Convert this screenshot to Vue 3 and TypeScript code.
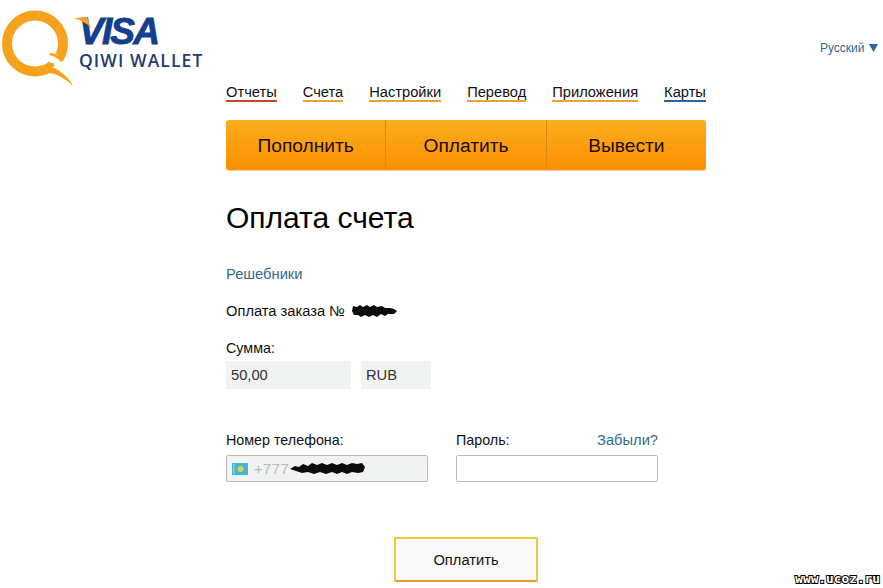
<script setup lang="ts">
const navItems = [
  { label: 'Отчеты', color: '#c8452f' },
  { label: 'Счета', color: '#e9a23c' },
  { label: 'Настройки', color: '#e9a23c' },
  { label: 'Перевод', color: '#e9a23c' },
  { label: 'Приложения', color: '#e9a23c' },
  { label: 'Карты', color: '#2a64a0' },
]

const actions = ['Пополнить', 'Оплатить', 'Вывести']
</script>

<template>
  <div class="page">
    <div class="brand">
      <svg class="q-mark" width="78" height="90" viewBox="0 0 78 90">
        <ellipse cx="35" cy="43.5" rx="28" ry="28" fill="none" stroke="#f6a21d" stroke-width="10" />
        <path d="M50 53 L58 55 L60 62 L66 60 L62 68 L54 72 L50 62 Z" fill="#fff" />
        <path d="M50 53 Q56 53 61 58 L59 60 Q55 56 49 55 Z" fill="#f6a21d" />
        <circle cx="52" cy="65" r="2.3" fill="#f6a21d" />
        <path d="M37 67 C47 64 57 68 62 73 C67 77 71 81 73 86 C68 81 63 78 57 75 C50 72 44 73 37 72 Z" fill="#f6a21d" />
      </svg>
      <div class="brand-text">
        <svg class="flick" width="18" height="12" viewBox="0 0 18 12">
          <path d="M0 1 L13 0 L17 11 C12 6 7 3 0 1 Z" fill="#f6a21d" />
        </svg>
        <span class="visa">VISA</span>
        <span class="wallet">QIWI WALLET</span>
      </div>
    </div>

    <main class="content">
      <nav class="nav">
        <a v-for="item in navItems" :key="item.label" class="nav-link" :style="{ borderColor: item.color }">
          {{ item.label }}
        </a>
      </nav>

      <div class="actions">
        <a v-for="action in actions" :key="action" class="action">{{ action }}</a>
      </div>

      <h1 class="title">Оплата счета</h1>

      <a class="link provider">Решебники</a>

      <p class="order">
        Оплата заказа №
        <svg class="blob" width="46" height="14" viewBox="0 0 46 14">
          <path d="M1 2 L5 3 L8 1 L11 3 L15 1 L18 3 L22 1 L25 3 L30 2 L33 4 L38 4 L42 5 L45 7 L42 10 L36 10 L33 12 L29 10 L25 13 L21 11 L17 13 L13 11 L9 13 L6 11 L2 11 L0 7 Z" fill="#0c0c0c" />
        </svg>
      </p>

      <div class="label sum-label">Сумма:</div>
      <div class="sum-row">
        <div class="readonly amount">50,00</div>
        <div class="readonly currency">RUB</div>
      </div>

      <div class="auth-row">
        <div class="field">
          <div class="label-row"><span class="label">Номер телефона:</span></div>
          <div class="input phone">
            <svg class="flag" width="16" height="12" viewBox="0 0 16 12">
              <rect width="16" height="12" fill="#45b4dc" />
              <circle cx="8.5" cy="6" r="3" fill="#d8cf5a" />
              <rect x="1" y="1" width="1.5" height="10" fill="#9fcf9a" />
            </svg>
            <span class="prefix">+777</span>
            <svg class="blob" width="76" height="15" viewBox="0 0 76 15">
              <path d="M0 8 L5 5 L9 6 L13 3 L18 5 L22 2 L27 4 L32 2 L37 4 L42 2 L47 4 L52 2 L57 4 L62 2 L67 3 L72 2 L75 6 L73 11 L68 12 L62 11 L57 13 L52 11 L47 13 L42 11 L36 13 L30 11 L24 13 L18 11 L12 12 L6 10 Z" fill="#0c0c0c" />
            </svg>
          </div>
        </div>
        <div class="field">
          <div class="label-row">
            <span class="label">Пароль:</span>
            <a class="link">Забыли?</a>
          </div>
          <div class="input"></div>
        </div>
      </div>

      <div class="submit-row">
        <button class="submit" type="button">Оплатить</button>
      </div>
    </main>

    <aside class="lang">
      <a class="link lang-link">Русский</a>
      <svg width="9" height="8" viewBox="0 0 9 8"><path d="M0 0 H9 L4.5 8 Z" fill="#2a6496" /></svg>
    </aside>

    <div class="watermark">www.ucoz.ru</div>
  </div>
</template>

<style scoped>
.page {
  position: relative;
  display: flex;
  width: 883px;
  height: 588px;
  overflow: hidden;
  background: #fff;
  color: #111;
  font-family: "Liberation Sans", Arial, sans-serif;
  font-size: 14.7px;
}

.brand {
  display: flex;
  flex: none;
  width: 226px;
  height: 90px;
  align-items: flex-start;
}

.q-mark {
  flex: none;
  margin-right: 1px;
}

.brand-text {
  position: relative;
  display: flex;
  flex-direction: column;
  padding-top: 14px;
}

.flick {
  position: absolute;
  top: 17px;
  left: -5px;
}

.visa {
  color: #143f8c;
  font-size: 37px;
  font-weight: 700;
  font-style: italic;
  line-height: 36px;
  letter-spacing: -1.8px;
  -webkit-text-stroke: 0.9px #143f8c;
}

.wallet {
  color: #1f3c6e;
  font-family: "Open Sans", sans-serif;
  font-size: 17.5px;
  font-weight: 600;
  line-height: 20px;
  letter-spacing: 1.1px;
  white-space: nowrap;
}

.content {
  flex: none;
  width: 480px;
  padding-top: 84px;
}

.nav {
  display: flex;
  justify-content: space-between;
}

.nav-link {
  height: 16px;
  border-bottom: 2px solid;
  line-height: 16px;
}

.actions {
  display: flex;
  height: 50px;
  margin-top: 18px;
  border-radius: 3px;
  background: linear-gradient(#fcae1e, #fb8f00);
  box-shadow: 0 1px 1px #f5c98a;
}

.action {
  flex: 1;
  border-left: 1px solid #d98a12;
  color: #1a0d00;
  font-size: 19.2px;
  line-height: 52px;
  text-align: center;
}

.action:first-child {
  border-left: 0;
}

.title {
  margin: 30px 0 0;
  font-size: 30px;
  font-weight: 400;
  line-height: 36px;
  color: #000;
}

.link {
  color: #2f6a8c;
}

.provider {
  display: block;
  margin-top: 29px;
  line-height: 18px;
}

.order {
  display: flex;
  align-items: center;
  gap: 7px;
  height: 18px;
  margin: 19px 0 0;
  line-height: 18px;
}

.label {
  font-size: 14.3px;
  line-height: 18px;
}

.sum-label {
  margin-top: 19px;
}

.sum-row {
  display: flex;
  gap: 10px;
  margin-top: 4px;
}

.readonly {
  height: 28px;
  padding-left: 5px;
  background: #f1f2f2;
  color: #333;
  line-height: 28px;
}

.amount {
  width: 120px;
}

.currency {
  width: 65px;
}

.auth-row {
  display: flex;
  gap: 28px;
  margin-top: 42px;
}

.field {
  width: 202px;
}

.label-row {
  display: flex;
  justify-content: space-between;
  height: 18px;
  line-height: 18px;
  margin-bottom: 6px;
}

.input {
  box-sizing: border-box;
  height: 27px;
  border: 1px solid #bbb;
  border-radius: 2px;
  background: #fff;
}

.phone {
  display: flex;
  align-items: center;
  padding-left: 5px;
  background: #f1f2f2;
}

.flag {
  flex: none;
}

.prefix {
  margin-left: 6px;
  color: #b9bcbc;
  letter-spacing: 0.5px;
}

.phone .blob {
  margin-left: 1px;
}

.submit-row {
  display: flex;
  justify-content: center;
  margin-top: 55px;
}

.submit {
  box-sizing: border-box;
  width: 144px;
  height: 45px;
  padding: 0;
  border: 2px solid #efc93a;
  border-bottom-color: #e39a3c;
  border-radius: 2px;
  background: #fafafa;
  color: #111;
  font-family: inherit;
  font-size: 14.7px;
}

.lang {
  display: flex;
  align-items: center;
  gap: 4px;
  align-self: flex-start;
  margin-top: 41px;
  margin-left: 114px;
  font-size: 12px;
  line-height: 14px;
}

.watermark {
  position: absolute;
  right: 3px;
  bottom: 3px;
  color: #fff;
  font-family: "DejaVu Sans Mono", monospace;
  font-size: 12.8px;
  font-weight: 700;
  line-height: 12px;
  -webkit-text-stroke: 2px #000;
  paint-order: stroke fill;
}
</style>
